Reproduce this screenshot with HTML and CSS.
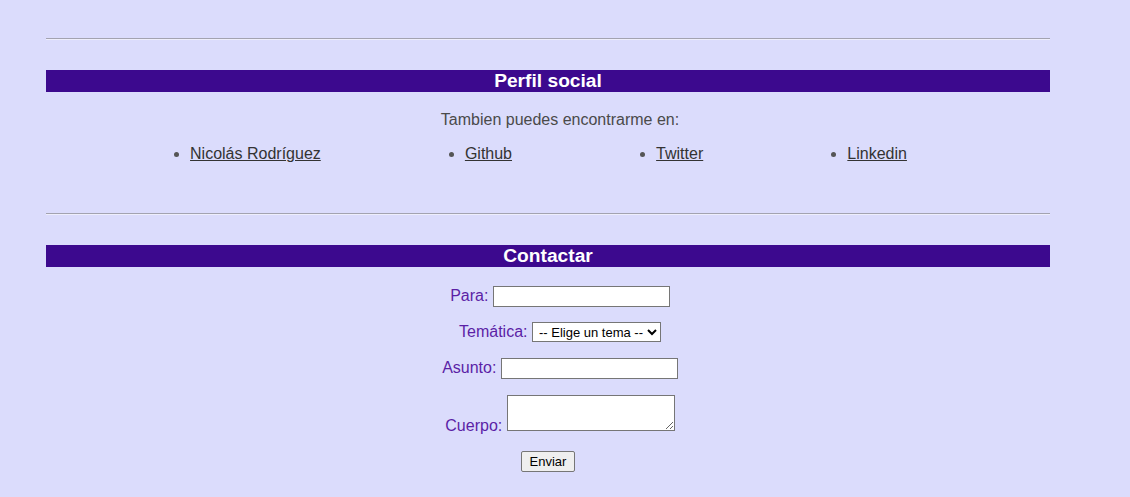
FILE: index.html
```html
<!DOCTYPE html>
<html lang="es">
<head>
<meta charset="utf-8">
<title>Perfil</title>
<link rel="stylesheet" href="styles.css">
</head>
<body>
<main class="page">
  <hr class="rule rule-first">
  <section class="social">
    <h2 class="bar">Perfil social</h2>
    <p class="intro">Tambien puedes encontrarme en:</p>
    <ul class="links">
      <li><a href="#">Nicolás Rodríguez</a></li>
      <li><a href="#">Github</a></li>
      <li><a href="#">Twitter</a></li>
      <li><a href="#">Linkedin</a></li>
    </ul>
  </section>
  <hr class="rule rule-second">
  <section class="contact">
    <h2 class="bar">Contactar</h2>
    <form class="form">
      <div class="row row-para"><label for="para">Para:</label> <input id="para" class="field" type="email"></div>
      <div class="row row-tema"><label for="tema">Temática:</label> <select id="tema" class="select"><option>-- Elige un tema --</option></select></div>
      <div class="row row-asunto"><label for="asunto">Asunto:</label> <input id="asunto" class="field" type="text"></div>
      <div class="row row-cuerpo"><label for="cuerpo">Cuerpo:</label> <textarea id="cuerpo" class="area"></textarea></div>
      <div class="submit-row"><button type="button" class="btn">Enviar</button></div>
    </form>
  </section>
</main>
</body>
</html>
```
FILE: styles.css
```css
html, body {
  margin: 0;
  padding: 0;
  background: #dbdcfc;
}
body {
  font-family: "Liberation Sans", Arial, sans-serif;
  font-size: 16px;
  color: #4a4a4a;
}
.page {
  margin-left: 46px;
  width: 1004px;
  padding-top: 38px;
  padding-bottom: 20px;
}
.rule {
  margin: 0;
  border: 0;
  border-top: 1px solid #a3a3b0;
  border-bottom: 1px solid #eeeefc;
  height: 0;
}
.bar {
  margin: 0;
  background: #3c098e;
  color: #ffffff;
  font-size: 19.2px;
  font-weight: bold;
  line-height: 22px;
  height: 22px;
  text-align: center;
}
.social {
  margin-top: 30px;
}
.intro {
  margin: 19px 0 0;
  padding-left: 24px;
  text-align: center;
  line-height: 18px;
}
.links {
  display: flex;
  justify-content: space-around;
  margin: 16px 0 0;
  padding: 0 71px 0 72px;
  line-height: 18px;
  color: #555;
}
.links a {
  color: #333;
  text-decoration: underline;
}
.rule-second {
  margin-top: 50px;
}
.contact {
  margin-top: 30px;
}
.form {
  padding-top: 19px;
}
.row {
  text-align: center;
  padding-left: 24px;
  color: #5b1fa6;
  line-height: 18px;
}
.row + .row {
  margin-top: 15px;
}
.row-asunto {
  padding-top: 1px;
}
.row-cuerpo {
  padding-top: 1px;
}
.field {
  box-sizing: border-box;
  width: 177px;
  height: 21px;
  border: 1px solid #767676;
  background: #fff;
  margin: 0;
  padding: 1px 2px;
  font-size: 13px;
}
.select {
  box-sizing: border-box;
  width: 129px;
  height: 20px;
  border: 1px solid #767676;
  border-radius: 0;
  background: #fff;
  font-family: "Liberation Sans", Arial, sans-serif;
  font-size: 13px;
  color: #000;
  margin: 0;
  padding: 0 0 0 2px;
}
.area {
  box-sizing: border-box;
  width: 168px;
  height: 36px;
  border: 1px solid #767676;
  background: #fff;
  margin: 0;
  padding: 2px;
  vertical-align: baseline;
}
.submit-row {
  text-align: center;
  margin-top: 16px;
}
.btn {
  box-sizing: border-box;
  width: 54px;
  height: 21px;
  border: 1px solid #767676;
  border-radius: 2px;
  background: #efefef;
  font-family: "Liberation Sans", Arial, sans-serif;
  font-size: 13px;
  color: #000;
  padding: 0;
}
```
